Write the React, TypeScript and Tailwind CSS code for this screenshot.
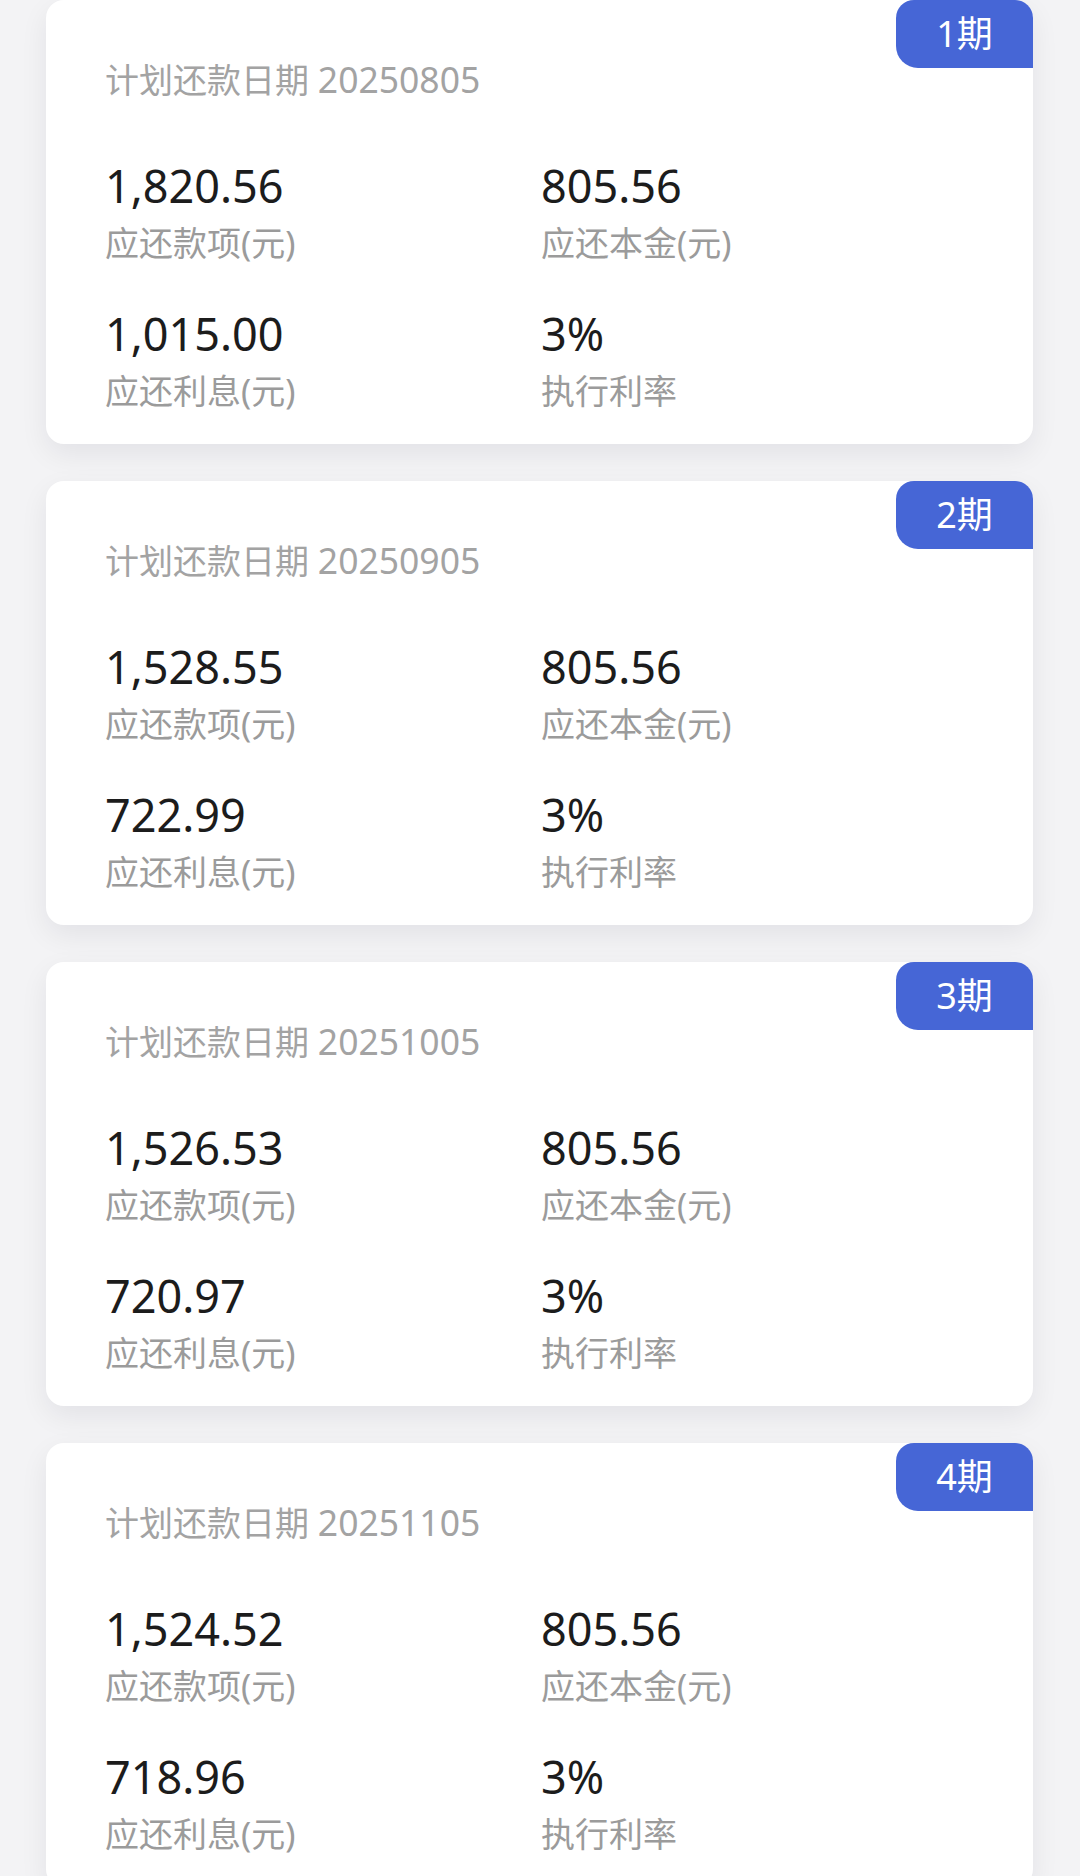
const plans = [
  { no: 1, date: "20250805", total: "1,820.56", principal: "805.56", interest: "1,015.00", rate: "3%" },
  { no: 2, date: "20250905", total: "1,528.55", principal: "805.56", interest: "722.99", rate: "3%" },
  { no: 3, date: "20251005", total: "1,526.53", principal: "805.56", interest: "720.97", rate: "3%" },
  { no: 4, date: "20251105", total: "1,524.52", principal: "805.56", interest: "718.96", rate: "3%" },
];

const Field = ({ value, label }: { value: string; label: string }) => (
  <div className="flex flex-col">
    <span className="text-[45px] leading-[54px] text-[#1c1c1c]">{value}</span>
    <span className="mt-[10px] text-[34px] leading-[40px] text-[#9b9b9b]">{label}</span>
  </div>
);

export default function App() {
  return (
    <div className="w-[1080px] h-[1876px] overflow-hidden bg-[#f3f3f5] font-['Noto_Sans','Noto_Sans_CJK_SC',sans-serif]">
      <div className="flex flex-col gap-[37px] pl-[46px] pr-[47px]">
        {plans.map((p) => (
          <div
            key={p.no}
            className="relative h-[444px] shrink-0 rounded-[18px] bg-white pl-[59px] pt-[59px] shadow-[0_10px_28px_rgba(20,20,40,0.07)]"
          >
            {/* period badge */}
            <div className="absolute right-0 top-0 flex h-[68px] w-[137px] items-center justify-center rounded-tl-[18px] rounded-tr-[18px] rounded-bl-[22px] bg-[#4666d6] text-[36px] leading-none text-white">
              {p.no}期
            </div>

            <div className="h-[40px] text-[34px] leading-[40px] text-[#a3a3a3]">
              计划还款日期 <span className="text-[35.5px]">{p.date}</span>
            </div>

            <div className="mt-[60px] grid grid-cols-[436px_1fr] gap-y-[44px]">
              <Field value={p.total} label="应还款项(元)" />
              <Field value={p.principal} label="应还本金(元)" />
              <Field value={p.interest} label="应还利息(元)" />
              <Field value={p.rate} label="执行利率" />
            </div>
          </div>
        ))}
      </div>
    </div>
  );
}
